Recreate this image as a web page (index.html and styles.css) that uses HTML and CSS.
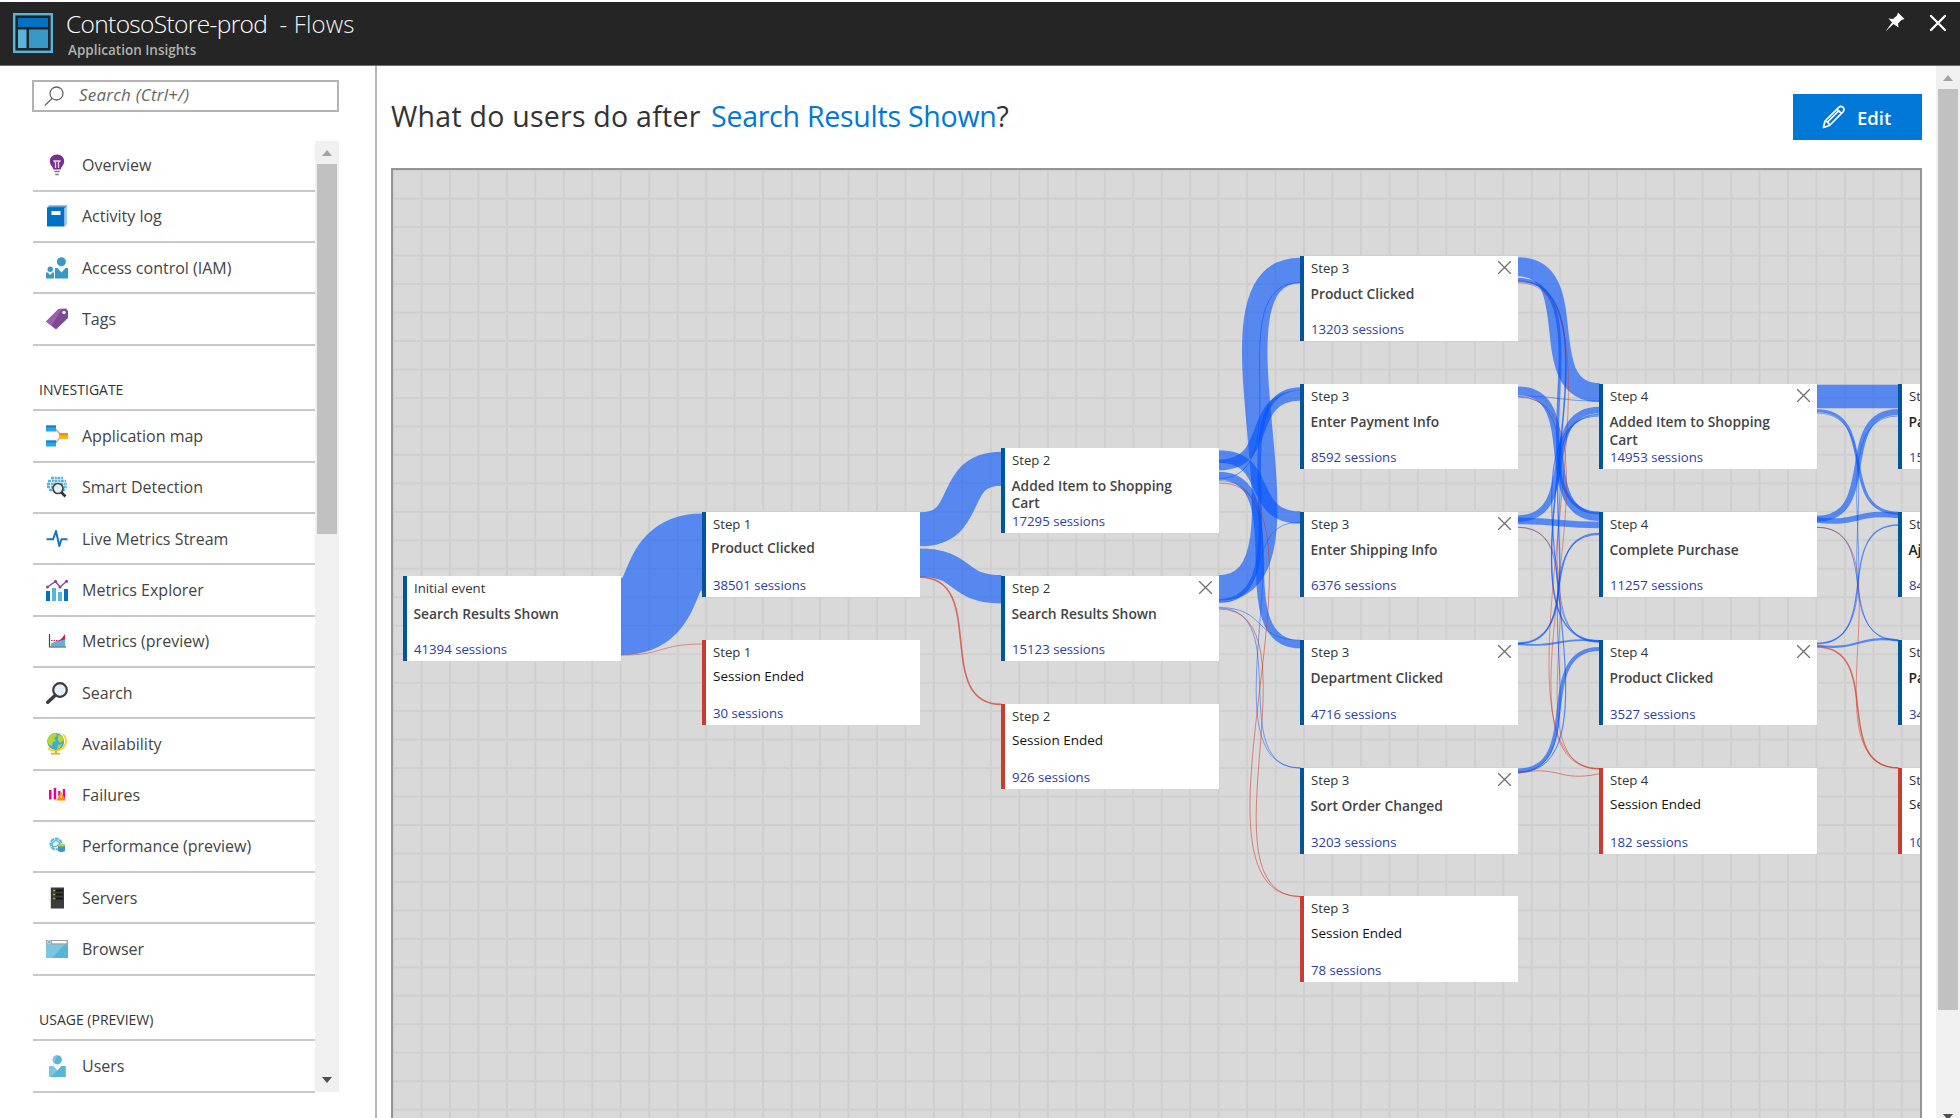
FILE: index.html
```html
<!DOCTYPE html>
<html lang="en">
<head>
<meta charset="utf-8">
<title>ContosoStore-prod - Flows</title>
<link rel="stylesheet" href="styles.css">
</head>
<body>
<header class="topbar">
  <svg class="logo" viewBox="0 0 40 40"><rect x="1.2" y="1.2" width="37.6" height="37.6" fill="#202428" stroke="#59b4d9" stroke-width="2.4"/><rect x="5" y="5" width="30" height="9" fill="#0072c6"/><rect x="5" y="16.500" width="8.500" height="18.500" fill="#59b4d9"/><rect x="16" y="16.500" width="19" height="18.500" fill="#3999c6"/></svg>
  <div class="titles">
    <h1><span class="resource">ContosoStore-prod</span><span class="page">- Flows</span></h1>
    <p>Application Insights</p>
  </div>
  <svg class="pin" viewBox="0 0 20 20"><path d="M13 0.500 19.500 7 16.500 8 13 11.500 13.500 15.500 8.500 12 0.500 19.500 7 10.500 3.500 6.500 8 7 12 3.500Z" fill="#fff"/></svg>
  <svg class="close" viewBox="0 0 18 18"><path d="M2 2 16 16M16 2 2 16" stroke="#fff" stroke-width="2.300" stroke-linecap="round"/></svg>
</header>
<div class="body">
  <nav class="sidebar">
    <div class="search"><svg viewBox="0 0 20 20"><circle cx="12.500" cy="7.500" r="6.500"/><path d="M8 12.500 0.800 19.500"/></svg><span>Search (Ctrl+/)</span></div>
    <div class="menu">
      <ul>
        <li><svg viewBox="0 0 22 22"><path d="M11 .5c-4.300 0-7.200 3-7.200 6.700 0 3.400 2.600 5 3.600 8.300h7.200c1-3.300 3.600-4.900 3.600-8.300C18.200 3.500 15.300.5 11 .5Z" fill="#7a2f8f"/><path d="M9.500 14V8.500L7.500 6.500M12.500 14V8.500l2-2M8.500 7h5" stroke="#e6d3ec" stroke-width="1.300" fill="none"/><path d="M8.300 17.500h5.400M9.300 20.500h3.400" stroke="#7b7b7b" stroke-width="1.500"/></svg>Overview</li>
        <li><svg viewBox="0 0 22 22"><path d="M3 .5h18v18l-2 2.500V3H1Z" fill="#2c86cf"/><path d="M19 3l2-2.500V18l-2 2.500Z" fill="#a5cbe8"/><path d="M1 3 3 1h17" stroke="#a5cbe8" fill="none" stroke-width=".8"/><rect x="1" y="2.500" width="17.500" height="19" fill="#0072c6"/><rect x="5.500" y="6" width="9" height="4" fill="#fff"/></svg>Activity log</li>
        <li><svg viewBox="0 0 22 22" fill="#3999c6"><circle cx="15.400" cy="4.700" r="4.500"/><path d="M9 11h2.500l4 4.500 4-4.500H22v10.500H9Z"/><circle cx="4.200" cy="12.200" r="2.700"/><path d="M0 15.500h1.800L4.200 18l2.200-2.500H8v6H0Z"/></svg>Access control (IAM)</li>
        <li><svg viewBox="0 0 22 22"><path d="M0 13.500 12.500 1 20 .500 22 3v7L10 21.500Z" fill="#804998"/><path d="M0 13.500 12.500 1 16 .800 5.500 17.800Z" fill="#9a62b0"/><circle cx="18" cy="4.500" r="1.700" fill="#fff"/></svg>Tags</li>
      </ul>
      <h2>INVESTIGATE</h2>
      <ul>
        <li><svg viewBox="0 0 22 22"><path d="M9 3.500 14 9M9 18.500 14 12.500" stroke="#aaa" stroke-width="1.300"/><rect y=".5" width="10" height="6" fill="#27a5e5"/><rect y=".5" width="10" height="2" fill="#1382c9"/><rect y="15.500" width="10" height="6" fill="#27a5e5"/><rect y="15.500" width="10" height="2" fill="#1382c9"/><rect x="13" y="8" width="9" height="6" fill="#fdb813"/><rect x="13" y="8" width="9" height="2.500" fill="#ff8c00"/></svg>Application map</li>
        <li><svg viewBox="0 0 22 22"><path d="M5 2h12M2 5h18M1 8h20M1 11h20M3 14h17" stroke="#59b4d9" stroke-width="2.400" stroke-dasharray="3 .8 2 .6"/><circle cx="12" cy="12.500" r="5" fill="#dff0f8" stroke="#444" stroke-width="1.700"/><path d="M15.500 16.500 19.500 20.500" stroke="#333" stroke-width="2.600"/></svg>Smart Detection</li>
        <li><svg viewBox="0 0 22 22"><path d="M.5 11.300H7L10 3l3.300 15 2.200-6.700h6" fill="none" stroke="#1a73c0" stroke-width="2" stroke-linejoin="round"/></svg>Live Metrics Stream</li>
        <li><svg viewBox="0 0 22 22"><path d="M0 12h4v10H0ZM18 10h4v12h-4Z" fill="#0072c6"/><path d="M6 9h4v13H6Z" fill="#59b4d9"/><path d="M12 13h4v9h-4Z" fill="#59b4d9"/><path d="M1.500 8 9.500 2.500 14 8l7-6" stroke="#804998" fill="none" stroke-width="1.400"/><g fill="#804998"><circle cx="1.500" cy="8" r="1.500"/><circle cx="9.500" cy="2.300" r="1.500"/><circle cx="14" cy="8" r="1.500"/><circle cx="20.500" cy="2.300" r="1.500"/></g></svg>Metrics Explorer</li>
        <li><svg viewBox="0 0 22 22"><path d="M5 16.500V13.500L13 10l6-1v7.500Z" fill="#59b4d9"/><path d="M5 13.500 12 11.500 16 8l3-4v5.500l-6 1.500Z" fill="#e3145c"/><path d="M5 10.500h8" stroke="#e3145c" stroke-dasharray="1.500 1"/><path d="M3.500 4v13H20" stroke="#444" stroke-width="1.200" fill="none"/></svg>Metrics (preview)</li>
        <li><svg viewBox="0 0 22 22"><circle cx="14" cy="8" r="6.800" fill="#e3f1f9" stroke="#3b3b3b" stroke-width="2.200"/><path d="M9 13.500 1.800 20.200" stroke="#3b3b3b" stroke-width="3.600" stroke-linecap="round"/></svg>Search</li>
        <li><svg viewBox="0 0 22 22"><path d="M17 1c4 4 4.500 9.500 0 13.500S5 18.500 2 15" fill="none" stroke="#fcd116" stroke-width="1.700"/><circle cx="9.700" cy="8.500" r="8.500" fill="#3fa9d8"/><path d="M2 5C4 1.500 7 .3 10 0l1 3-3 2 2 3-3 1-1 4-3-1-2-4ZM12 2l4 1 2 4-4 3-2-3ZM12 12l4-1-2 4-3 1Z" fill="#b8d432"/><path d="M9 17.500h2v2.500h3v1.500H5V20h4Z" fill="#f7a600"/></svg>Availability</li>
        <li><svg viewBox="0 0 22 22"><path d="M3 6h2.500v9.500H3ZM7.700 4h2.500v11.500H7.700ZM12.200 7h2.200v5h-2.200ZM16.800 5h2.200v10h-2.200Z" fill="#ec008c"/><path d="M15 7.500 20 16.500H10.500Z" fill="#ff8c00"/><path d="M15.200 10.500v3.500" stroke="#fff"/></svg>Failures</li>
        <li><svg viewBox="0 0 22 22"><circle cx="10" cy="9" r="5.500" fill="#eaf6fc" stroke="#59b4d9" stroke-width="2" stroke-dasharray="4 .8"/><path d="M6 8l4-3 4 3-3 3-4 1Z" fill="none" stroke="#59b4d9" stroke-width="1.200"/><path d="M12 10v6c1.500 1.500 5 1.500 7 0v-6Z" fill="#3999c6"/><ellipse cx="15.500" cy="10" rx="3.500" ry="1.500" fill="#b8d432"/></svg>Performance (preview)</li>
        <li><svg viewBox="0 0 22 22"><rect x="4.800" y=".5" width="13.200" height="21" fill="#3c3c3c"/><path d="M8 3.500h9M8 7.500h9M8 11.500h9" stroke="#161616" stroke-width="2.200"/><path d="M7.300 3.500h2M7.300 7.500h2M7.300 11.500h2" stroke="#a6ce00" stroke-width="1.600"/></svg>Servers</li>
        <li><svg viewBox="0 0 22 22"><rect y="2" width="22" height="18" fill="#59b4d9"/><path d="M0 6h19L6 20H0Z" fill="#7dc4e1"/><rect y="2" width="22" height="4.500" fill="#a0a1a2"/><rect x="6" y="3" width="14.500" height="2.300" fill="#fff"/><circle cx="3" cy="4.200" r="1.700" fill="#59b4d9" stroke="#fff" stroke-width=".6"/></svg>Browser</li>
      </ul>
      <h2>USAGE (PREVIEW)</h2>
      <ul>
        <li><svg viewBox="0 0 22 22"><circle cx="11.300" cy="4.800" r="4.600" fill="#59b4d9"/><path d="M3 11h4l4.300 4.500L15.500 11h4.300v11H3Z" fill="#59b4d9"/><path d="M3 11h4l4.300 4.500L5 22H3ZM11.300.2a4.600 4.600 0 0 0-3.200 7.900Z" fill="#7dc4e1"/></svg>Users</li>
      </ul>
    </div>
    <div class="scroll side-scroll"><i class="up"></i><b></b><i class="down"></i></div>
  </nav>
  <main>
    <div class="heading">
      <h2><span>What do users do after</span> <a>Search Results Shown</a><span>?</span></h2>
      <button class="edit"><svg viewBox="0 0 24 24"><path d="M1.500 22.500 3 16 17 2.200q2-1.600 4 .2t.2 4.200L7.500 20.500ZM3 16q3.500.500 4.500 4.500M15 4.200l4.500 4.500M6 16.500 17 5.500" fill="none" stroke="#fff" stroke-width="1.700" stroke-linejoin="round"/></svg>Edit</button>
    </div>
    <div class="canvas">
      <svg class="links" viewBox="393 170 1528 948"></svg>
      <div class="card" style="left:10px;top:405.500px"><p>Initial event</p><h3>Search Results Shown</h3><em>41394 sessions</em></div>

      <div class="card" style="left:309px;top:341.700px"><p>Step 1</p><h3 class="tight">Product Clicked</h3><em>38501 sessions</em></div>
      <div class="card end" style="left:309px;top:469.900px"><p>Step 1</p><h3>Session Ended</h3><em>30 sessions</em></div>

      <div class="card" style="left:608px;top:277.600px"><p>Step 2</p><h3>Added Item to Shopping Cart</h3><em>17295 sessions</em></div>
      <div class="card" style="left:608px;top:405.700px"><p>Step 2</p><h3>Search Results Shown</h3><em>15123 sessions</em><svg viewBox="0 0 12 12"><path d="M0 0 12 12M12 0 0 12"/></svg></div>
      <div class="card end" style="left:608px;top:533.900px"><p>Step 2</p><h3>Session Ended</h3><em>926 sessions</em></div>

      <div class="card" style="left:907px;top:85.500px"><p>Step 3</p><h3>Product Clicked</h3><em>13203 sessions</em><svg viewBox="0 0 12 12"><path d="M0 0 12 12M12 0 0 12"/></svg></div>
      <div class="card" style="left:907px;top:213.700px"><p>Step 3</p><h3>Enter Payment Info</h3><em>8592 sessions</em></div>
      <div class="card" style="left:907px;top:341.900px"><p>Step 3</p><h3>Enter Shipping Info</h3><em>6376 sessions</em><svg viewBox="0 0 12 12"><path d="M0 0 12 12M12 0 0 12"/></svg></div>
      <div class="card" style="left:907px;top:470px"><p>Step 3</p><h3>Department Clicked</h3><em>4716 sessions</em><svg viewBox="0 0 12 12"><path d="M0 0 12 12M12 0 0 12"/></svg></div>
      <div class="card" style="left:907px;top:598.200px"><p>Step 3</p><h3>Sort Order Changed</h3><em>3203 sessions</em><svg viewBox="0 0 12 12"><path d="M0 0 12 12M12 0 0 12"/></svg></div>
      <div class="card end" style="left:907px;top:726.400px"><p>Step 3</p><h3>Session Ended</h3><em>78 sessions</em></div>

      <div class="card" style="left:1206px;top:213.700px"><p>Step 4</p><h3>Added Item to Shopping Cart</h3><em>14953 sessions</em><svg viewBox="0 0 12 12"><path d="M0 0 12 12M12 0 0 12"/></svg></div>
      <div class="card" style="left:1206px;top:341.900px"><p>Step 4</p><h3>Complete Purchase</h3><em>11257 sessions</em></div>
      <div class="card" style="left:1206px;top:470px"><p>Step 4</p><h3>Product Clicked</h3><em>3527 sessions</em><svg viewBox="0 0 12 12"><path d="M0 0 12 12M12 0 0 12"/></svg></div>
      <div class="card end" style="left:1206px;top:598.200px"><p>Step 4</p><h3>Session Ended</h3><em>182 sessions</em></div>

      <div class="card cut" style="left:1505px;top:213.700px"><p>St</p><h3>Pa</h3><em>15</em></div>
      <div class="card cut" style="left:1505px;top:341.900px"><p>St</p><h3>Aj</h3><em>84</em></div>
      <div class="card cut" style="left:1505px;top:470px"><p>St</p><h3>Pa</h3><em>34</em></div>
      <div class="card cut end" style="left:1505px;top:598.200px"><p>St</p><h3>Se</h3><em>10</em></div>
    </div>
  </main>
  <div class="scroll main-scroll"><i class="up"></i><b></b><i class="down"></i></div>
</div>
<script src="flows.js"></script>
</body>
</html>
```
FILE: flows.js
```js
// x range of the gap between two neighbouring step columns
const gaps = [[620.7, 702.5], [919.8, 1001.5], [1218.9, 1300.5], [1517.9, 1599.5], [1816.9, 1898.5]];

// gap, y at the source, y at the target, width, session end, sag of a nearly flat link
const links = [
  [0, 616.5, 552, 77], [0, 655.2, 644, 0.7, 1],
  [1, 529.3, 468.7, 34], [1, 562.7, 589.3, 28.5], [1, 577.3, 704.4, 1.6, 1],

  [2, 588, 270.5, 25.5], [2, 456.4, 517.6, 12.5], [2, 465, 395.5, 10.5],
  [2, 600.8, 389, 3.5], [2, 475.8, 644.3, 8], [2, 478.5, 282.5, 0.9],
  [2, 602.5, 522, 0.8], [2, 480.5, 768, 0.8], [2, 607.5, 640.2, 0.8],
  [2, 608, 768, 0.8], [2, 483, 896.5, 0.8, 1], [2, 609, 896.5, 0.8, 1],

  [3, 266.8, 392.6, 19], [3, 279.3, 513, 3], [3, 281, 641, 1.5], [3, 281.5, 642, 0.7],
  [3, 282.7, 768.5, 0.7, 1], [3, 390.7, 516.8, 8.5], [3, 396, 401, 0.8],
  [3, 396.5, 641.5, 0.8], [3, 397, 769, 0.7, 1],
  [3, 518.5, 410, 6.5], [3, 521, 525, 6.5], [3, 527.3, 642.3, 0.8], [3, 527.3, 769.2, 0.7, 1],
  [3, 643, 414.5, 1.4], [3, 643.7, 533.5, 1.4], [3, 644, 641, 1.8, 0, 4],
  [3, 770.5, 649, 4], [3, 772, 534.5, 1], [3, 772.6, 416, 1.2],
  [3, 773.3, 773.7, 0.8, 1, -9],

  [4, 396.5, 396.5, 23.5], [4, 410.8, 513.2, 3], [4, 413, 640, 0.8],
  [4, 518.8, 412, 6], [4, 520, 515.5, 5.5, 0, 5], [4, 527.3, 640.5, 0.9], [4, 527.3, 767.8, 0.7, 1],
  [4, 643.2, 416, 0.8], [4, 643.7, 525, 1.3], [4, 645.5, 640.5, 2.2, 0, 6], [4, 647, 768, 1.5, 1]
];

const layer = document.querySelector('.links');
for (const [gap, from, to, width, ended, sag = 0] of links) {
  const [x0, x1] = gaps[gap];
  const reach = (x1 - x0) * Math.min(1.6, 0.5 + 0.0027 * Math.abs(to - from));
  const path = document.createElementNS('http://www.w3.org/2000/svg', 'path');
  path.setAttribute('d', `M${x0} ${from}C${x0 + reach} ${from + sag} ${x1 - reach} ${to - sag} ${x1} ${to}`);
  path.setAttribute('stroke-width', width);
  path.setAttribute('class', ended ? 'ended' : 'flow');
  layer.append(path);
}
```
FILE: styles.css
```css
* { box-sizing: border-box; }
body {
  margin: 0;
  height: 1118px;
  padding-top: 2px;
  display: flex;
  flex-direction: column;
  overflow: hidden;
  background: #fff;
  color: #3c3c3c;
  font-family: "Open Sans", "Noto Sans", sans-serif;
}
h1, h2, h3, p, ul { margin: 0; padding: 0; font-weight: 400; list-style: none; }

.topbar {
  height: 64px;
  flex: none;
  display: flex;
  align-items: flex-start;
  padding: 11px 13px 0;
  background: #252525;
  border-bottom: 1px solid #6a6a6a;
}
.logo { width: 40px; height: 40px; }
.titles { flex: 1; margin: -6px 0 0 13px; }
.titles h1 { display: flex; font-size: 24.5px; line-height: 33px; color: #fff; }
.resource { width: 213.500px; font-weight: 300; letter-spacing: -.65px; }
.page { font-size: 24px; font-weight: 300; letter-spacing: .15px; color: #f0f0f0; }
.titles p { margin: 1px 0 0 2px; font-size: 13.5px; line-height: 18px; font-weight: 600; color: #b1b1b1; }
.pin { width: 20px; height: 20px; margin: -1px 24px 0 0; }
.close { width: 18px; height: 18px; margin-top: 1px; }

.body { flex: 1; display: flex; min-height: 0; }
.sidebar {
  width: 376.500px;
  flex: none;
  padding: 14px 0 0 32px;
  display: grid;
  grid-template: 61px 951px / 283px 24px;
  border-right: 2px solid #b8b8b8;
}
.search {
  grid-column: 1 / 3;
  height: 32px;
  display: flex;
  align-items: center;
  padding-left: 10px;
  border: 2px solid #b3b3b3;
  font-size: 17px;
  font-style: italic;
  line-height: 24px;
  letter-spacing: .2px;
  color: #666;
}
.search svg { width: 20px; height: 20px; margin-right: 15px; fill: none; stroke: #666; stroke-width: 1.3; }
.search span { margin-top: -2px; }
.menu { padding: 0 0 0 1px; margin-top: -.5px; }
.menu li {
  height: 51.330px;
  display: flex;
  align-items: center;
  padding-left: 13px;
  border-bottom: 2px solid #c8c8c8;
  font-size: 16px;
  color: #444;
}
.menu li svg { width: 22px; height: 22px; margin-right: 14px; }
.menu h2 {
  height: 65.400px;
  padding: 34px 0 0 6px;
  border-bottom: 2px solid #c8c8c8;
  font-size: 14px;
  line-height: 20px;
  font-weight: 500;
  color: #333;
}

.scroll { position: relative; display: flex; flex-direction: column; align-items: center; background: #f0f0f0; }
.scroll b { width: 20px; background: #c1c1c1; }
.scroll i { width: 0; height: 0; border: 5.500px solid transparent; }
.scroll .up { border-bottom: 6px solid #a3a3a3; border-top: 0; }
.scroll .down { border-top: 6px solid #505050; border-bottom: 0; margin-top: auto; }
.side-scroll { padding: 9px 0 9px; }
.side-scroll b { margin-top: 8px; height: 370px; }
.main-scroll { width: 24px; padding: 9px 0 0; }
.main-scroll b { margin-top: 8px; height: 921px; }
.main-scroll .down { margin-bottom: -2px; }

main { flex: 1; min-width: 0; padding: 28px 14px 0 14.500px; display: flex; flex-direction: column; }
.heading { flex: none; height: 74px; display: flex; justify-content: space-between; align-items: flex-start; }
.heading h2 { font-size: 28.500px; line-height: 38px; font-weight: 500; margin-top: 3px; color: #333; white-space: nowrap; }
.heading h2 span:first-child { letter-spacing: .25px; }
.heading h2 a { margin-left: 3px; letter-spacing: -.25px; color: #0078d7; }
.edit {
  width: 129px;
  height: 46px;
  padding: 0 0 0 29px;
  display: flex;
  align-items: center;
  gap: 11px;
  border: 0;
  background: #0078d7;
  color: #fff;
  font: 600 18.500px "Open Sans", sans-serif;
}
.edit svg { width: 24px; height: 24px; }

.canvas {
  position: relative;
  flex: 1;
  overflow: hidden;
  border: 2px solid #949494;
  border-bottom: 0;
  background-color: #d9d9d9;
  background-image:
    linear-gradient(90deg, #cfcfcf 1.500px, transparent 1.500px),
    linear-gradient(#cfcfcf 1.500px, transparent 1.500px);
  background-size: 28.480px 28.480px;
  background-position: 27.500px 27.700px;
}
.links { position: absolute; left: 0; top: 0; width: 1528px; height: 948px; }
.links path { fill: none; }
.flow { stroke: rgba(0, 82, 255, .6); }
.ended { stroke: rgba(212, 44, 22, .65); }

.card {
  position: absolute;
  width: 218px;
  height: 85.400px;
  padding: 2px 0 2.800px 7px;
  display: flex;
  flex-direction: column;
  border-left: 4px solid #00569c;
  background: #fff;
  font-size: 13.200px;
}
.card.end { border-color: #c93c2f; }
.card p { line-height: 20px; color: #333; }
.card h3 { width: 180px; margin: 7.200px 0 0 -.5px; font-size: 13.800px; line-height: 17.700px; font-weight: 600; color: #444; }
.card .tight { margin: 5px 0 0 -2px; }
.card.end h3 { margin: 6.200px 0 0; font-size: 13.500px; font-weight: 500; color: #111; }
.card em { margin-top: auto; font-style: normal; line-height: 18px; color: #2c3e9e; }
.card svg { position: absolute; right: 7px; top: 5px; width: 13px; height: 13px; fill: none; stroke: #707070; stroke-width: 1.200; }
.card.cut h3 { color: #222; }
```
